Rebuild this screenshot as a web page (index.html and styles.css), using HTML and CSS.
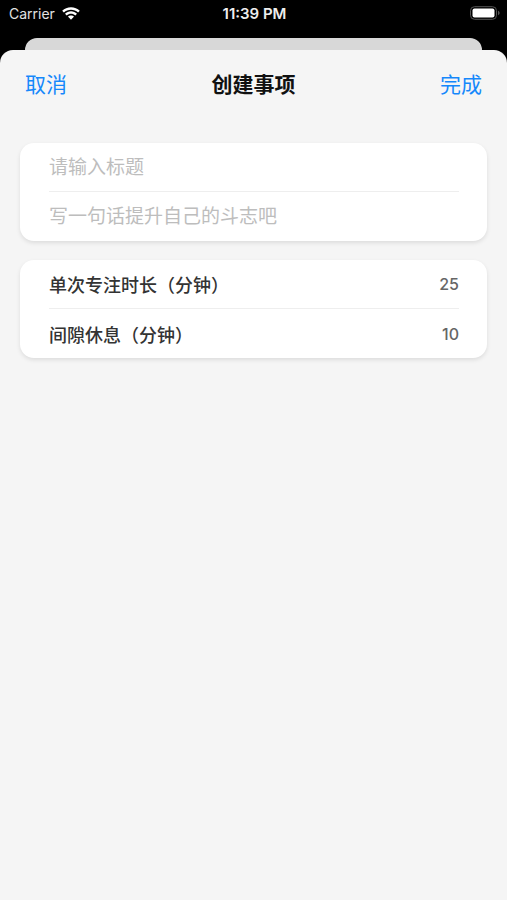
FILE: index.html
```html
<!DOCTYPE html>
<html lang="zh-CN">
<head>
<meta charset="utf-8">
<meta name="viewport" content="width=device-width, initial-scale=1">
<title>创建事项</title>
<link rel="stylesheet" href="styles.css">
</head>
<body>
<div class="status">
  <div class="carrier"><span>Carrier</span>
    <svg class="wifi" viewBox="0 0 18 13" aria-hidden="true"><path d="M9 0.2C5.6 0.2 2.500 1.500 0.200 3.700L1.900 5.500C3.800 3.700 6.300 2.700 9 2.700s5.200 1 7.100 2.800L17.800 3.700C15.500 1.500 12.400 0.200 9 0.200zM9 4.300c-2.300 0-4.400 0.900-6 2.400l1.700 1.700C5.900 7.400 7.400 6.700 9 6.700s3.100 0.700 4.300 1.700L15 6.700C13.400 5.200 11.300 4.300 9 4.300zM9 8.400c-1.200 0-2.300 0.500-3.100 1.200L9 12.800l3.100-3.200C11.300 8.900 10.200 8.400 9 8.400z"/></svg>
  </div>
  <div class="clock">11:39 PM</div>
  <svg class="battery" viewBox="0 0 31 14" aria-hidden="true"><rect class="shell" x="1.500" y="0.700" width="26" height="12.600" rx="4"/><rect class="fill" x="3.500" y="2.500" width="22" height="9" rx="2"/><path class="tip" d="M29 4.800c1.100 0.400 1.600 1.200 1.600 2.200s-0.500 1.800-1.600 2.200z"/></svg>
</div>
<div class="behind"></div>
<form class="sheet">
  <header class="nav">
    <button type="button" class="action">取消</button>
    <h1>创建事项</h1>
    <button type="submit" class="action">完成</button>
  </header>
  <main class="groups">
    <section class="card">
      <div class="row"><input type="text" aria-label="标题" placeholder="请输入标题"></div>
      <div class="row"><input type="text" aria-label="激励语" placeholder="写一句话提升自己的斗志吧"></div>
    </section>
    <section class="card">
      <div class="row"><label for="focus">单次专注时长（分钟）</label><input class="number" id="focus" type="text" inputmode="numeric" value="25"></div>
      <div class="row"><label for="rest">间隙休息（分钟）</label><input class="number" id="rest" type="text" inputmode="numeric" value="10"></div>
    </section>
  </main>
</form>
</body>
</html>
```
FILE: styles.css
```css
* { box-sizing: border-box; }
body {
  margin: 0;
  min-height: 100vh;
  display: flex;
  flex-direction: column;
  background: #000;
  font-family: Inter, "Noto Sans CJK SC", sans-serif;
}
.status {
  display: grid;
  grid-template-columns: 1fr auto 1fr;
  align-items: center;
  height: 26px;
  margin-bottom: 12px;
  padding: 0 7px 0 9px;
  color: #fff;
  font-size: 14px;
}
.carrier { display: flex; align-items: center; gap: 7px; color: #e2e2e2; }
.wifi { width: 18px; height: 13px; fill: #fff; }
.clock { color: #eee; font-size: 15px; font-weight: 600; }
.battery { width: 31px; height: 14px; justify-self: end; }
.shell { fill: none; stroke: #555; }
.fill { fill: #fff; }
.tip { fill: #555; }
.behind {
  height: 12px;
  margin: 0 25px;
  border-radius: 12px 12px 0 0;
  background: #d8d8d8;
}
.sheet {
  flex: 1;
  border-radius: 13px 13px 0 0;
  background: #f5f5f5;
}
.nav {
  display: flex;
  align-items: center;
  justify-content: space-between;
  height: 66px;
  padding: 0 25px;
}
.nav h1 { margin: 0; color: #111; font-size: 21px; font-weight: 700; }
.action {
  padding: 0;
  border: 0;
  background: none;
  color: #1588fb;
  font: inherit;
  font-size: 21px;
}
.groups { display: grid; gap: 19px; padding: 27px 20px; }
.card {
  padding: 0 28px 0 29px;
  border-radius: 14px;
  background: #fff;
  box-shadow: 0 2px 4px rgba(0, 0, 0, 0.1);
}
.row { display: flex; align-items: center; height: 48px; }
.row + .row { height: 50px; border-top: 1px solid #eee; }
.row label { flex: 1; color: #333; font-size: 18px; font-weight: 500; }
.row input {
  width: 100%;
  padding: 0;
  border: 0;
  outline: 0;
  background: none;
  color: #333;
  font: inherit;
  font-size: 19px;
}
.row input::placeholder { color: #bdbdbd; }
.row .number { width: 60px; color: #666; font-size: 16px; font-weight: 500; text-align: right; }
```
